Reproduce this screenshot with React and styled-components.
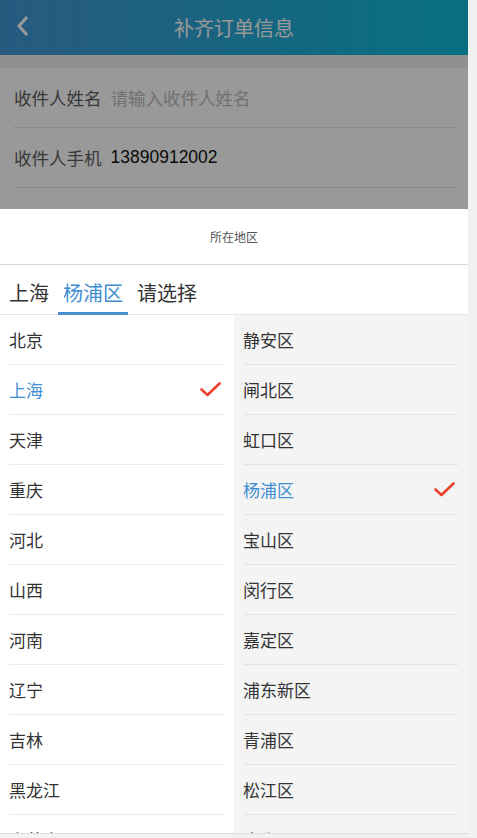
import React from "react";
import styled, { createGlobalStyle } from "styled-components";

const GlobalStyle = createGlobalStyle`
  html, body { margin: 0; padding: 0; background: #fff; overflow: hidden; }
  body { font-family: "Liberation Sans", "Noto Sans CJK SC", sans-serif; }
  * { box-sizing: border-box; }
`;

const Frame = styled.div`
  display: flex;
  width: 477px;
  height: 838px;
`;

const Screen = styled.div`
  flex: 1;
  display: flex;
  flex-direction: column;
  min-width: 0;
`;

const Viewport = styled.div`
  flex: 1;
  position: relative;
  overflow: hidden;
  background: #fff;
`;

const VTrack = styled.div`
  width: 9px;
  background: #f1f1f1;
`;

const HTrack = styled.div`
  height: 5px;
  background: #f1f1f1;
  border-top: 1px solid #dcdcdc;
`;

const Header = styled.header`
  height: 55px;
  display: flex;
  align-items: center;
  justify-content: center;
  position: relative;
  background: linear-gradient(90deg, #4396d5 0%, #0cbbd5 100%);
`;

const BackButton = styled.button`
  position: absolute;
  left: 14px;
  top: 14px;
  width: 18px;
  height: 24px;
  padding: 0;
  border: 0;
  background: none;
  display: flex;
  align-items: center;
  justify-content: center;
`;

const Title = styled.h1`
  margin: 0;
  font-size: 20px;
  font-weight: 400;
  color: #fff;
`;

const Band = styled.div`
  height: 13px;
  background: #eeeeee;
`;

const Form = styled.div`
  background: #fff;
`;

const Row = styled.div`
  height: 60px;
  margin: 0 11px 0 13px;
  border-bottom: 1px solid #e8e8e8;
  display: flex;
  align-items: center;
  gap: 9px;
  font-size: 17.5px;
`;

const Label = styled.span`
  color: #5e5e5e;
  padding-left: 1px;
`;

const Value = styled.span`
  color: ${(p) => (p.$placeholder ? "#bcbcbc" : "#111")};
`;

const Overlay = styled.div`
  position: absolute;
  inset: 0;
  background: rgba(0, 0, 0, 0.4);
`;

const Sheet = styled.div`
  position: absolute;
  left: 0;
  right: 0;
  top: 209px;
  bottom: 0;
  background: #fff;
  display: flex;
  flex-direction: column;
`;

const SheetTitle = styled.div`
  height: 56px;
  flex: none;
  display: flex;
  align-items: center;
  justify-content: center;
  font-size: 12px;
  color: #555;
  border-bottom: 1px solid #d9d9d9;
`;

const Tabs = styled.div`
  height: 50px;
  flex: none;
  display: flex;
  align-items: stretch;
  gap: 4px;
  padding-left: 4px;
  border-bottom: 1px solid #e6e6e6;
`;

const Tab = styled.div`
  padding: 5px 5px 0;
  display: flex;
  align-items: center;
  font-size: 20px;
  color: ${(p) => (p.$active ? "#3f8ed3" : "#333")};
  position: relative;
  &::after {
    content: "";
    display: ${(p) => (p.$active ? "block" : "none")};
    position: absolute;
    left: 0;
    right: 0;
    bottom: -1px;
    height: 3px;
    background: #4a90cf;
  }
`;

const Columns = styled.div`
  flex: 1;
  min-height: 0;
  display: grid;
  grid-template-columns: 234px 1fr;
  overflow: hidden;
`;

const Column = styled.ul`
  margin: 0;
  padding: 0 10px 0 ${(p) => (p.$sub ? "10px" : "9px")};
  list-style: none;
  background: ${(p) => (p.$sub ? "#f4f4f4" : "#fff")};
  overflow: hidden;
`;

const Item = styled.li`
  height: 50px;
  display: flex;
  align-items: center;
  justify-content: space-between;
  border-bottom: 1px solid ${(p) => (p.$sub ? "#e3e3e3" : "#ebebeb")};
  font-size: 17px;
  color: ${(p) => (p.$selected ? "#3f8ed3" : "#333")};
  padding: 0 3px 1px 0;
  & > span { margin-left: ${(p) => (p.$sub ? "-1px" : "0")}; }
`;

const Check = () => (
  <svg width="21" height="15" viewBox="0 0 21 15" fill="none">
    <path d="M1.5 7.5 L7.5 13 L19.5 1.5" stroke="#f0402e" strokeWidth="2.6" strokeLinecap="round" strokeLinejoin="round" />
  </svg>
);

const provinces = ["北京", "上海", "天津", "重庆", "河北", "山西", "河南", "辽宁", "吉林", "黑龙江", "内蒙古"];
const districts = ["静安区", "闸北区", "虹口区", "杨浦区", "宝山区", "闵行区", "嘉定区", "浦东新区", "青浦区", "松江区", "金山区"];

export default function App() {
  return (
    <>
      <GlobalStyle />
      <Frame>
        <Screen>
          <Viewport>
            <Header>
              <BackButton aria-label="返回">
                <svg width="14" height="22" viewBox="0 0 14 22" fill="none">
                  <path d="M11 2 L3 11 L11 20" stroke="#fff" strokeWidth="3" />
                </svg>
              </BackButton>
              <Title>补齐订单信息</Title>
            </Header>
            <Band />
            <Form>
              <Row>
                <Label>收件人姓名</Label>
                <Value $placeholder>请输入收件人姓名</Value>
              </Row>
              <Row>
                <Label>收件人手机</Label>
                <Value>13890912002</Value>
              </Row>
              <Row>
                <Label>所在地区</Label>
                <Value>上海 杨浦区</Value>
              </Row>
            </Form>
            <Overlay />
            <Sheet>
              <SheetTitle>所在地区</SheetTitle>
              <Tabs>
                <Tab>上海</Tab>
                <Tab $active>杨浦区</Tab>
                <Tab>请选择</Tab>
              </Tabs>
              <Columns>
                <Column>
                  {provinces.map((p) => (
                    <Item key={p} $selected={p === "上海"}>
                      <span>{p}</span>
                      {p === "上海" && <Check />}
                    </Item>
                  ))}
                </Column>
                <Column $sub>
                  {districts.map((d) => (
                    <Item key={d} $sub $selected={d === "杨浦区"}>
                      <span>{d}</span>
                      {d === "杨浦区" && <Check />}
                    </Item>
                  ))}
                </Column>
              </Columns>
            </Sheet>
          </Viewport>
          <HTrack />
        </Screen>
        <VTrack />
      </Frame>
    </>
  );
}
